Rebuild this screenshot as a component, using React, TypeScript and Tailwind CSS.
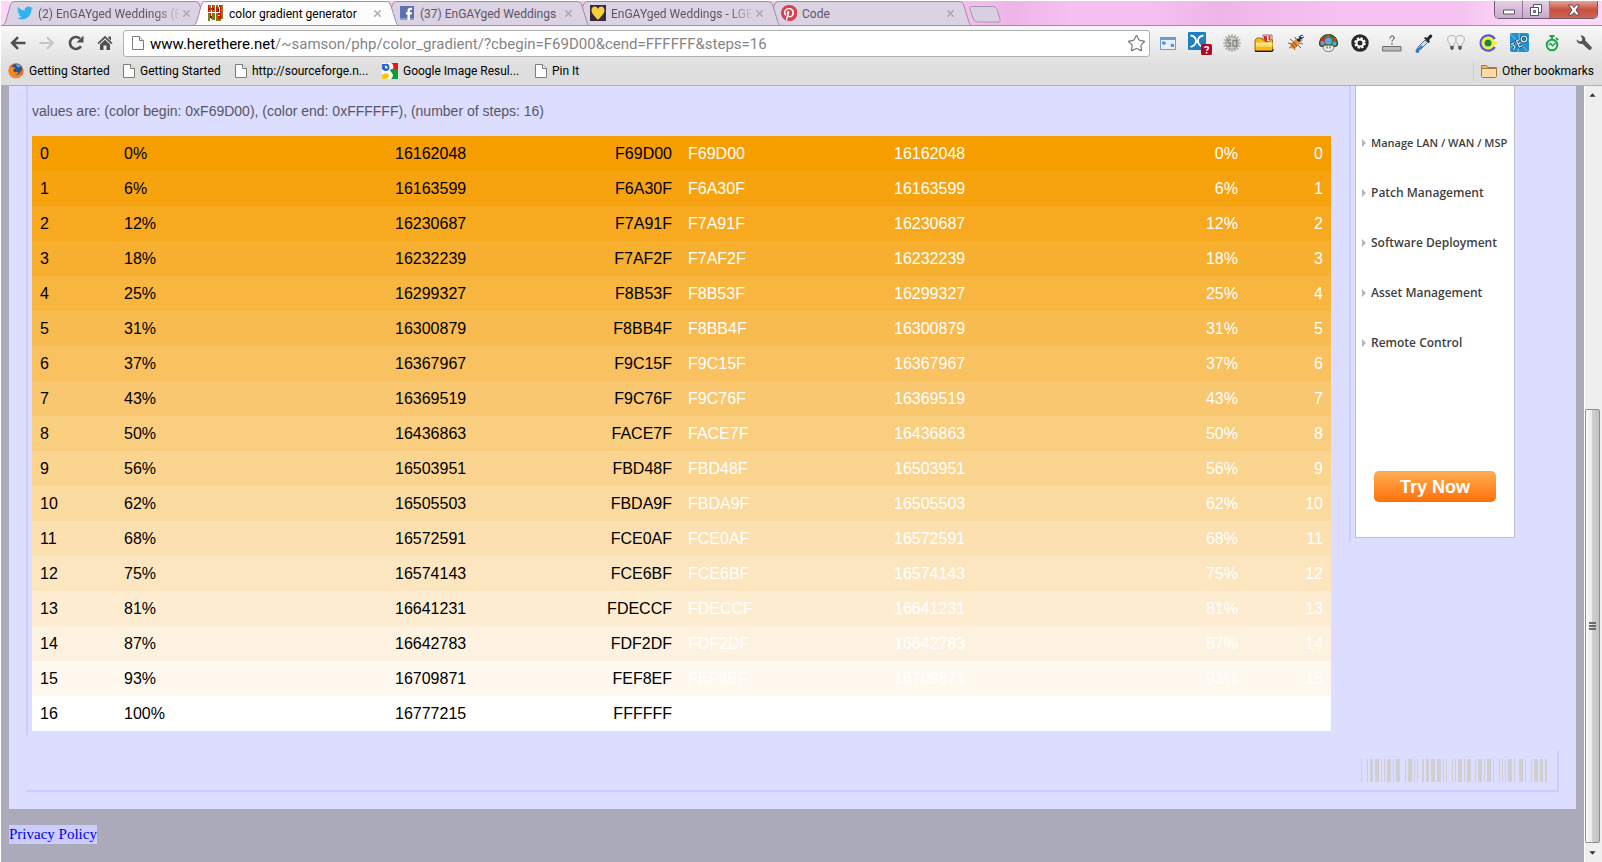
import type { ReactNode } from "react";
import { Star, X } from "lucide-react";

type Row = { step: number; pct: number; dec: number; hex: string; bg: string };

const ROWS: Row[] = [
  { step: 0, pct: 0, dec: 16162048, hex: "F69D00", bg: "bg-[#f69d00]" },
  { step: 1, pct: 6, dec: 16163599, hex: "F6A30F", bg: "bg-[#f6a30f]" },
  { step: 2, pct: 12, dec: 16230687, hex: "F7A91F", bg: "bg-[#f7a91f]" },
  { step: 3, pct: 18, dec: 16232239, hex: "F7AF2F", bg: "bg-[#f7af2f]" },
  { step: 4, pct: 25, dec: 16299327, hex: "F8B53F", bg: "bg-[#f8b53f]" },
  { step: 5, pct: 31, dec: 16300879, hex: "F8BB4F", bg: "bg-[#f8bb4f]" },
  { step: 6, pct: 37, dec: 16367967, hex: "F9C15F", bg: "bg-[#f9c15f]" },
  { step: 7, pct: 43, dec: 16369519, hex: "F9C76F", bg: "bg-[#f9c76f]" },
  { step: 8, pct: 50, dec: 16436863, hex: "FACE7F", bg: "bg-[#face7f]" },
  { step: 9, pct: 56, dec: 16503951, hex: "FBD48F", bg: "bg-[#fbd48f]" },
  { step: 10, pct: 62, dec: 16505503, hex: "FBDA9F", bg: "bg-[#fbda9f]" },
  { step: 11, pct: 68, dec: 16572591, hex: "FCE0AF", bg: "bg-[#fce0af]" },
  { step: 12, pct: 75, dec: 16574143, hex: "FCE6BF", bg: "bg-[#fce6bf]" },
  { step: 13, pct: 81, dec: 16641231, hex: "FDECCF", bg: "bg-[#fdeccf]" },
  { step: 14, pct: 87, dec: 16642783, hex: "FDF2DF", bg: "bg-[#fdf2df]" },
  { step: 15, pct: 93, dec: 16709871, hex: "FEF8EF", bg: "bg-[#fef8ef]" },
  { step: 16, pct: 100, dec: 16777215, hex: "FFFFFF", bg: "bg-white" },
];

const AD_LINKS = [
  { label: "Manage LAN / WAN / MSP", size: "text-[11px]" },
  { label: "Patch Management", size: "text-xs" },
  { label: "Software Deployment", size: "text-xs" },
  { label: "Asset Management", size: "text-xs" },
  { label: "Remote Control", size: "text-xs" },
];

// [x, width] of every bar
const BARS = [
  [0, 1], [6, 1], [9, 3], [14, 4], [20, 1], [23, 1], [26, 4], [32, 1], [35, 4],
  [44, 1], [47, 4], [53, 1], [56, 1], [61, 2], [65, 3], [70, 4], [76, 4], [82, 1], [85, 1],
  [91, 1], [94, 1], [97, 4], [103, 1], [106, 4], [114, 1], [117, 4], [123, 1], [126, 4], [132, 1],
  [138, 1], [141, 1], [144, 1], [147, 4], [153, 1], [158, 4], [164, 1],
  [170, 1], [173, 4], [179, 3], [184, 2],
];

/* ---------- favicons ---------- */

function TwitterIcon() {
  return (
    <svg viewBox="0 0 24 24" className="size-4" fill="#2fb3ee">
      <path d="M24 4.6a10 10 0 0 1-2.8.8 4.9 4.9 0 0 0 2.1-2.7 10 10 0 0 1-3.1 1.2 4.9 4.9 0 0 0-8.4 4.5A14 14 0 0 1 1.7 3.1a4.9 4.9 0 0 0 1.5 6.6 4.900 4.900 0 0 1-2.2-.6 4.900 4.900 0 0 0 3.900 4.900 5 5 0 0 1-2.200.1 4.900 4.900 0 0 0 4.600 3.400A9.900 9.900 0 0 1 0 19.500a14 14 0 0 0 7.500 2.200c9.100 0 14.300-7.700 14-14.600A10 10 0 0 0 24 4.600z" />
    </svg>
  );
}

function HereThereIcon() {
  return (
    <svg viewBox="0 0 16 16" className="size-4" shapeRendering="crispEdges">
      <path fill="#7e7e12" d="M1 0h2v7H1zM5 0h2v7H5zM8 0h2v2H8zM10 2h1v5h-1zM13 0h2v9h-2zM0 8h2v8H0zM4 8h3v7H4zM8 8h2v8H8zM10 14h3v2h-3zM13 9h2v5h-2z" />
      <path fill="#f40a0a" d="M0 0h1v7H0zM3 3h2v2H3zM4 0h1v3H4zM4 5h1v2H4zM8 2h2v5H8zM11 0h2v2h-2zM12 2h1v6h-1zM2 8h1v3H2zM3 11h1v3H3zM10 8h3v2h-3zM10 11h2v3h-2zM12 12h1v2h-1z" />
      <path fill="#5a1200" d="M1 3h1v2H1zM5 3h1v2H5zM10 4h1v3h-1zM2 11h1v2H2zM12 10h1v2h-1z" />
    </svg>
  );
}

function FacebookIcon() {
  return (
    <svg viewBox="0 0 16 16" className="size-4">
      <path fill="#5f70b0" d="M1 1h14v14H1z" />
      <path fill="#8e9bcb" d="M1 13h14v2H1z" />
      <path fill="#fff" d="M8.500 15V9.500H7V7.300h1.500V5.600c0-1.900 1-2.900 2.800-2.900H13v2.200h-1.200c-.7 0-.9.300-.9.900v1.500H13l-.3 2.200h-1.800V15z" />
    </svg>
  );
}

function HeartIcon() {
  return (
    <svg viewBox="0 0 16 16" className="size-4">
      <path fill="#352b3c" d="M0 0h16v16H0z" />
      <path fill="#f8d13a" d="M8 15C6 12.500 1.500 9 1.500 5.300 1.500 3 2.900 1.500 4.800 1.500 6.300 1.500 7.400 2.500 8 4c.6-1.500 1.700-2.500 3.200-2.500 1.900 0 3.300 1.500 3.300 3.800C14.500 9 10 12.500 8 15z" />
    </svg>
  );
}

function PinterestIcon() {
  return (
    <svg viewBox="0 0 24 24" className="size-4">
      <circle cx="12" cy="12" r="11" fill="#fff" />
      <path fill="#d8414f" d="M12 0C5.400 0 0 5.400 0 12c0 5.100 3.200 9.400 7.600 11.200-.1-.9-.2-2.400 0-3.500l1.500-6s-.4-.7-.4-1.800c0-1.700 1-3 2.200-3 1 0 1.500.8 1.500 1.700 0 1.100-.7 2.600-1 4-.3 1.200.6 2.200 1.800 2.200 2.100 0 3.800-2.200 3.800-5.500 0-2.900-2.100-4.900-5-4.900-3.400 0-5.400 2.600-5.400 5.200 0 1 .4 2.100.9 2.700.1.100.1.200.1.300l-.4 1.400c0 .2-.2.300-.4.200-1.500-.7-2.400-2.900-2.400-4.600 0-3.800 2.700-7.200 7.900-7.200 4.100 0 7.300 2.900 7.300 6.900 0 4.100-2.600 7.400-6.200 7.400-1.200 0-2.300-.6-2.700-1.400l-.7 2.800c-.3 1-1 2.300-1.500 3.100A12 12 0 1 0 12 0z" />
    </svg>
  );
}

function FirefoxIcon() {
  return (
    <svg viewBox="0 0 16 16" className="size-4">
      <circle cx="8" cy="7.800" r="7.500" fill="#d9601a" />
      <circle cx="8.600" cy="6.200" r="5.400" fill="#27569c" />
      <path fill="#6aa5dc" d="M8 1.500c2-.5 4.500.5 5 2.500-1.500-.5-2 .5-3 .2S8 3 8 1.500z" />
      <path fill="#f58b1e" d="M1 3c.6-.2 1.300.3 1.700 1 .8-.5 2-.4 2.800.2 1.200.3 2 .8 1.700 1.400-.4.700-1.700.5-2 1.300.1 1.300 1 2.500 2.800 2.300.9-.1 1.700-.6 2.400 0-.6 1.700-2 2.600-4 2.500 3 1.400 6.300-.3 6.700-4.500.6.800.8 1.800.6 2.800-.7 3.500-3.300 5.300-6.200 5.200C3.300 15 .7 12 .6 8c0-2 .6-3 .4-5z" />
      <path fill="#fbc840" d="M14.500 4.500c1 1.500 1.200 3.600.6 5.400-.4-1.800-.2-3.400-.6-5.400z" />
    </svg>
  );
}

function GoogleIcon() {
  return (
    <svg viewBox="0 0 16 16" className="size-4">
      <path fill="#fff" d="M0 0h16v16H0z" />
      <path fill="#e8161b" d="M9 0h7v6h-5c1-2 .5-4.500-2-6z" />
      <path fill="#0f9a40" d="M9 6h7v10H9c2.500-2 2.500-5 0-7-1-1-1-2 0-3z" />
      <path fill="#f5c518" d="M0 16v-4c2-2.500 7-2.500 7 .5 0 1.800-1.500 3.500-4 3.500z" />
      <path fill="#2a63d6" d="M0 1h3c3-1 4.500 1 4.500 3.500S6 8 4 8C1.500 8 1 6.500 0 6z" />
      <path fill="#fff" d="M2.800 3c1.500-1 3 .8 2.700 2.300-1 .9-2.700-.3-2.700-2.300z" />
    </svg>
  );
}

function PageIcon() {
  return (
    <svg viewBox="0 0 12 16" className="h-4 w-3" fill="#fff" stroke="#7d7d7d">
      <path d="M.5 1.500h7l4 4v9H.5z" />
      <path d="M7.500 1.500v4h4" fill="#eee" />
    </svg>
  );
}

function FolderIcon() {
  return (
    <svg viewBox="0 0 16 14" className="h-[14px] w-4" stroke="#a9793b">
      <path fill="#e9b972" d="M.5 12V1.500h5l1.500 2h8.500V12z" />
      <path fill="#fbdca4" d="M1.500 4.500h13l1 1v7l-1 1h-13l-1-1v-7z" />
    </svg>
  );
}

/* ---------- tab strip ---------- */

type Tab = { title: string; icon: ReactNode; active?: boolean; faded?: boolean; z: string };

const TABS: Tab[] = [
  { title: "(2) EnGAYged Weddings (E", icon: <TwitterIcon />, faded: true, z: "z-10" },
  { title: "color gradient generator", icon: <HereThereIcon />, active: true, z: "z-20" },
  { title: "(37) EnGAYged Weddings", icon: <FacebookIcon />, z: "z-10" },
  { title: "EnGAYged Weddings - LGE", icon: <HeartIcon />, faded: true, z: "z-5" },
  { title: "Code", icon: <PinterestIcon />, z: "z-0" },
];

function BrowserTab({ title, icon, active, faded, z }: Tab) {
  return (
    <div className={`relative -mr-[15px] flex h-6 w-[206px] shrink-0 items-center pl-[15px] pr-4 ${z}`}>
      <svg
        viewBox="0 0 206 24"
        preserveAspectRatio="none"
        className="absolute inset-0 -z-10 size-full"
        fill={active ? "#fcfcfc" : "#dbd2e4"}
        stroke="#9c8fa3"
      >
        <path d="M.5 24.500C3 23.500 3.500 21 4.500 18L8 5C9 2 10 .5 13 .5h180c3 0 4 1.500 5 4.500l4 13c1 3 1.500 5.500 3.500 6.500" />
      </svg>
      <span className="shrink-0">{icon}</span>
      <span
        className={`ml-[5px] flex-1 whitespace-nowrap pt-px text-left ${active ? "text-black" : "text-[#5d5566]"} ${
          faded ? "[mask-image:linear-gradient(to_right,black_82%,transparent)]" : ""
        }`}
      >
        {title}
      </span>
      <button aria-label={`Close ${title}`} className="text-[#a9a3ae]">
        <X size={11} strokeWidth={3} />
      </button>
    </div>
  );
}

function TabStrip() {
  return (
    <div className="flex h-[25px] items-end border-t border-white bg-[linear-gradient(90deg,#ffd6fb_0,#f7c0f0_30%,#f4bdee_61%,#edb4e8_63%,#f6c0f2_67%,#f5bff1_72%,#eeb6e8_76%,#f6c2f2_84%,#f6c2f1_91%,#fbdaf8_95%,#fbd8f8_100%)] pl-px">
      <div className="flex items-end">
        {TABS.map((tab) => (
          <BrowserTab key={tab.title} {...tab} />
        ))}
      </div>
      <button aria-label="New tab" className="mb-[2px] ml-3">
        <svg viewBox="0 0 32 17" className="h-[17px] w-8" fill="#d8cfe2" stroke="#a497ab">
          <path d="M2.500.5h21c2.500 0 4 1 5 4l2.500 9c.5 2-.5 2.500-2 2.500H9c-2.500 0-4-1-5-4L1 3C.5 1.500 1 .5 2.500.5z" />
        </svg>
      </button>
      <div className="ml-auto mr-1 flex h-[18px] self-start overflow-hidden rounded-b-[5px] border border-t-0 border-[#6d5a6e]">
        <button
          aria-label="Minimize"
          className="flex w-7 items-center justify-center border-r border-[#8c7890] bg-linear-to-b from-[#e6cfe6] to-[#c9a9ca]"
        >
          <svg viewBox="0 0 14 6" className="mt-1 h-[6px] w-[14px]">
            <path d="M1.500 1h11v4h-11z" fill="#fff" stroke="#555465" />
          </svg>
        </button>
        <button
          aria-label="Restore"
          className="flex w-[27px] items-center justify-center border-r border-[#8c7890] bg-linear-to-b from-[#e6cfe6] to-[#c9a9ca]"
        >
          <svg viewBox="0 0 12 12" className="size-3" fill="#fff" stroke="#555465">
            <path d="M3.500.5h8v8h-8z" />
            <path d="M.5 3.500h8v8h-8z" />
            <path d="M3.500 6.500h2v2h-2z" fill="#c9a9ca" />
          </svg>
        </button>
        <button
          aria-label="Close window"
          className="flex w-[47px] items-center justify-center bg-linear-to-b from-[#e2a49b] from-0% via-[#c8503f] via-50% to-[#c9654e]"
        >
          <svg viewBox="0 0 14 12" className="h-3 w-[14px]" fill="#fff" stroke="#5c4653">
            <path d="M1.500 1h3.300L7 3.600 9.200 1h3.300L9 6l3.500 5H9.200L7 8.400 4.800 11H1.500L5 6z" />
          </svg>
        </button>
      </div>
    </div>
  );
}

/* ---------- toolbar ---------- */

const EXTENSIONS: { name: string; icon: ReactNode }[] = [
  {
    name: "Window resizer",
    icon: (
      <svg viewBox="0 0 16 13" className="h-[13px] w-4">
        <path d="M.5.5h15v12H.5z" fill="#e8f1fc" stroke="#6d9bd8" />
        <path d="M0 0h16v3H0z" fill="#6d9bd8" />
        <path d="M2 4.500h3l1 2-1.500 1.500L2 7zM10.500 7.500l1.500-1L14 7.500v2.500h-3z" fill="#5e90d2" />
      </svg>
    ),
  },
  {
    name: "Butterfly",
    icon: (
      <svg viewBox="0 0 24 24" className="size-6">
        <rect width="18" height="18" y="1" rx="1" fill="#1f7fc3" />
        <path d="M2.500 4.500C6 5 8 7 8 10s-2 5-5.500 6M15.500 4.500C12 5 10 7 10 10s2 5 5.500 6" stroke="#fff" strokeWidth="1.800" fill="none" />
        <path d="M8 9h2v3H8z" fill="#fff" />
        <rect x="13" y="13" width="11" height="11" rx="1.500" fill="#ae0a28" />
        <path d="M16.500 16.800c.2-1.600 4-1.600 4 .3 0 1.200-1.800 1.300-1.800 2.600M18.600 21v1.500" stroke="#fff" strokeWidth="1.500" fill="none" />
      </svg>
    ),
  },
  {
    name: "Seo gear",
    icon: (
      <svg viewBox="0 0 18 18" className="size-[18px]">
        <path d="M9 0v18M0 9h18M2.600 2.600l12.800 12.800M15.400 2.600L2.600 15.400M5.500.7l7 16.600M12.500.7l-7 16.600M.7 5.500l16.600 7M.7 12.500l16.600-7" stroke="#9c9c98" strokeWidth="1.200" />
        <circle cx="9" cy="9" r="6.300" fill="#cfcfcb" stroke="#a3a39f" strokeWidth="1.200" />
        <path d="M8 6H5v3h2.500v3H4.500M10 6.500h3.500V12H10z" fill="none" stroke="#85857f" strokeWidth="1.300" />
      </svg>
    ),
  },
  {
    name: "Folder",
    icon: (
      <svg viewBox="0 0 20 18" className="h-[18px] w-5">
        <path d="M9 1h9v9H9z" fill="#fff" stroke="#777" />
        <path d="M10 2h3v5h-3zM14.500 1.500h2V6h-2z" fill="#e02b2b" />
        <path d="M1 17V6l2-2h4l2 2h1l1 1.500h4l2-2 1.500.5v9.500L17.500 17z" fill="#f9b813" stroke="#9c6c08" />
        <path d="M2 8.500h16.500V11H2z" fill="#ffe98a" />
        <path d="M2 11h16.500v2H2z" fill="#fdd650" />
        <path d="M1 17.300h17l1.500-2" stroke="#1d1600" strokeWidth="1.200" fill="none" />
      </svg>
    ),
  },
  {
    name: "Firebug",
    icon: (
      <svg viewBox="0 0 18 18" className="size-[18px]">
        <path d="M3 5l4 3M1 9l5 1M2 14l4-2M8 3l2 4M8 16l-1-3M14 14l-3-3M16 10l-4-1" stroke="#8a6038" fill="none" />
        <ellipse cx="8" cy="10" rx="3.200" ry="5.800" transform="rotate(45 8 10)" fill="#e8923e" />
        <path d="M4 10l4 4M6 8l4 4" stroke="#a2551c" strokeWidth="1.200" />
        <circle cx="12.500" cy="5" r="2.700" fill="#1f2c31" />
        <circle cx="11" cy="3.500" r="1.300" fill="#dfe8ea" />
        <circle cx="14.500" cy="6" r="1.200" fill="#9fb0b4" />
        <path d="M13 2l3-1M15 4l2-1" stroke="#333" />
      </svg>
    ),
  },
  {
    name: "Mushroom",
    icon: (
      <svg viewBox="0 0 19 18" className="h-[18px] w-[19px]">
        <path d="M.5 10C.5 4 4.500.5 9.500.5s9 3.500 9 9.500c0 1.500-1 2.500-2 2.500h-14c-1 0-2-1-2-2.500z" fill="#2c7a2c" stroke="#333" />
        <path d="M1 9c0-3 2-6 4-7l2 4-2 6-3-.5z" fill="#b33a2a" />
        <circle cx="9.500" cy="7" r="3.600" fill="#5aa7e6" />
        <circle cx="15.500" cy="5.500" r="2" fill="#cf3a30" />
        <circle cx="3.500" cy="9" r="2" fill="#5aa7e6" />
        <circle cx="15.500" cy="9.500" r="2" fill="#5aa7e6" />
        <circle cx="9" cy="1.800" r="1.500" fill="#e8433a" />
        <path d="M4.500 12c2-1 8-1 10 0 1 3-1 5.500-5 5.500s-6-2.500-5-5.500z" fill="#f4f1ea" stroke="#777" />
        <path d="M8 12.500v2M11 12.500v2" stroke="#333" />
      </svg>
    ),
  },
  {
    name: "Options",
    icon: (
      <svg viewBox="0 0 18 18" className="size-[18px]">
        <circle cx="9" cy="9" r="8.700" fill="#26282b" />
        <circle cx="9" cy="9" r="4.800" fill="none" stroke="#fff" strokeWidth="2" strokeDasharray="2.200 1.570" />
        <circle cx="9" cy="9" r="3.500" fill="none" stroke="#fff" strokeWidth="2" />
      </svg>
    ),
  },
  {
    name: "Page rank",
    icon: (
      <svg viewBox="0 0 20 18" className="h-[18px] w-5">
        <path d="M8 4.500c0-3.500 4.500-3 4.200-.5C12 5.500 10 5.800 10 7.500M10 9v1.500" fill="none" stroke="#333" />
        <path d="M.5 12.500h18.500v4.500H.5z" fill="#bdbdbd" stroke="#6e6e6e" />
      </svg>
    ),
  },
  {
    name: "Color picker",
    icon: (
      <svg viewBox="0 0 18 20" className="h-5 w-[18px]">
        <path d="M10 7l2.500 2.500-7 7H3.500L3 14z" fill="#bfe0f6" stroke="#666f78" />
        <path d="M6 12l2 2-3 3-2-1z" fill="#3b7fd0" />
        <path d="M9 5l1.500-1L12 5l2.500-3c1.500-1.500 3.500.5 2.500 2l-3 3 1 1.500-1.500 1.500z" fill="#23262c" />
        <path d="M2.500 14.500c1.500 2 2 2.500 2 3.500a2 2 0 0 1-4 0c0-1 .5-1.500 2-3.500z" fill="#3a78c9" />
      </svg>
    ),
  },
  {
    name: "Bulbs",
    icon: (
      <svg viewBox="0 0 18 18" className="size-[18px]">
        <g fill="#f1f1f1" stroke="#b3b3b3">
          <path d="M5 1.500c-6 0-5 6-2 8.500v2h4v-2c3-3 3-8.500-2-8.500z" />
          <path d="M13 1.500c-5 0-5 5.500-2 8.500v2h4v-2c3-2.500 4-8.500-2-8.500z" />
        </g>
        <path d="M3.300 12h3.400v2.500L5.500 16h-1l-1.200-1.500zM11.300 12h3.400v2.500L13.500 16h-1l-1.200-1.500z" fill="#555" />
      </svg>
    ),
  },
  {
    name: "Circle C",
    icon: (
      <svg viewBox="0 0 18 18" className="size-[18px]">
        <path d="M15.700 5A7.500 7.500 0 1 0 15.700 13" fill="none" stroke="#5754e0" strokeWidth="2.600" />
        <circle cx="9" cy="9" r="5.200" fill="none" stroke="#f4f02a" strokeWidth="2.600" />
        <path d="M12 7.700h6v2.600h-6z" fill="#f4f02a" />
        <circle cx="9" cy="9" r="3.500" fill="#1a8a2c" />
      </svg>
    ),
  },
  {
    name: "SEO",
    icon: (
      <svg viewBox="0 0 20 20" className="size-5">
        <rect width="19" height="19" rx="2" fill="#2392cc" />
        <path d="M9.500 9.500L1 2M9.500 9.500L9 0M9.500 9.500L19 7M9.500 9.500L17 18M9.500 9.500L8 19M9.500 9.500L0 14" stroke="#7cc8ea" />
        <g fill="none" stroke="#0b4068" strokeWidth="2.600">
          <path d="M4.500 9.500l-3 1.500 3.500 2.500-1.500 3.500M9.500 6.500L6.500 8l3 6 3-1.500M8 11l2.500-1.300" />
          <circle cx="14" cy="6" r="2.800" />
        </g>
        <g fill="none" stroke="#d9f0fa" strokeWidth="1.300">
          <path d="M4.500 9.500l-3 1.500 3.500 2.500-1.500 3.500M9.500 6.500L6.500 8l3 6 3-1.500M8 11l2.500-1.300" />
          <circle cx="14" cy="6" r="2.800" />
        </g>
      </svg>
    ),
  },
  {
    name: "Stopwatch",
    icon: (
      <svg viewBox="0 0 14 18" className="h-[18px] w-[14px]" fill="none" stroke="#1fa64a">
        <circle cx="7" cy="11" r="5.300" fill="#e9f8ee" strokeWidth="2" />
        <path d="M3.500 11l2-1.500 2 2.500L10.500 9" strokeWidth="1.500" />
        <path d="M7 3v3M4.500 2h5M11 4l2 2" strokeWidth="2" />
      </svg>
    ),
  },
  {
    name: "Customize",
    icon: (
      <svg viewBox="0 0 18 18" className="size-[18px]">
        <path
          fill="#555"
          d="M5.500 1.500C8.500 1 11 3.500 10.300 6.500l6 6.200c1.500 1.600-1 4.300-2.800 2.800L7.300 9.700C4.300 10.600 1.500 8.500 1.500 5.500l3 2L7 6.800 7.300 4.500z"
        />
      </svg>
    ),
  },
];

function Toolbar() {
  return (
    <div className="flex h-[34px] items-center">
      <nav className="flex w-[122px] items-center pl-[2px]">
        <button aria-label="Back" className="flex w-[29px] justify-center">
          <svg viewBox="0 0 16 14" className="h-[14px] w-4" fill="none" stroke="#505050" strokeWidth="2.600">
            <path d="M15.500 7H2.500M8 1.200L2.200 7 8 12.800" />
          </svg>
        </button>
        <button aria-label="Forward" className="flex w-[29px] justify-center">
          <svg viewBox="0 0 16 14" className="h-[14px] w-4" fill="none" stroke="#c4c4c4" strokeWidth="2.200">
            <path d="M.5 7h13M8 1.200L13.800 7 8 12.800" />
          </svg>
        </button>
        <button aria-label="Reload" className="flex w-[29px] justify-center">
          <svg viewBox="0 0 16 16" className="size-4">
            <path d="M13 11.200A6 6 0 1 1 12 3.500" fill="none" stroke="#505050" strokeWidth="2.600" />
            <path d="M15.500.5v7h-7z" fill="#505050" />
          </svg>
        </button>
        <button aria-label="Home" className="flex w-[29px] justify-center">
          <svg viewBox="0 0 16 16" className="size-4" fill="#505050">
            <path d="M8 .8L15.500 8 14.300 9.200 8 3.300 1.700 9.200.5 8zM11.500 1.500H14v4l-2.500-2.300z" />
            <path d="M3 9.500l5-4.700 5 4.700V15H9.500v-4.500h-3V15H3z" />
          </svg>
        </button>
      </nav>
      <div className="flex h-[27px] flex-1 items-center rounded-[3px] border border-[#b0b0b0] bg-white pl-2 pr-[3px]">
        <PageIcon />
        <div className="ml-[6px] flex-1 whitespace-nowrap pt-px text-[15px] leading-6 text-[#858585]">
          <span className="text-black">www.herethere.net</span>
          /~samson/php/color_gradient/?cbegin=F69D00&amp;cend=FFFFFF&amp;steps=16
        </div>
        <button aria-label="Bookmark this page">
          <Star size={19} strokeWidth={1.500} color="#777" />
        </button>
      </div>
      <div className="ml-[2px] mr-[2px] flex">
        {EXTENSIONS.map((ext) => (
          <button key={ext.name} aria-label={ext.name} className="flex h-6 w-8 items-center justify-center">
            {ext.icon}
          </button>
        ))}
      </div>
    </div>
  );
}

const BOOKMARKS = [
  { title: "Getting Started", icon: <FirefoxIcon />, width: "w-[115px]" },
  { title: "Getting Started", icon: <PageIcon />, width: "w-[112px]" },
  { title: "http://sourceforge.n...", icon: <PageIcon />, width: "w-[147px]" },
  { title: "Google Image Resul...", icon: <GoogleIcon />, width: "w-[153px]" },
  { title: "Pin It", icon: <PageIcon />, width: "w-[60px]" },
];

function BookmarksBar() {
  return (
    <div className="flex h-[25px] items-center pb-[3px] pl-[7px] pr-2 text-black">
      {BOOKMARKS.map((b, i) => (
        <a key={i} href="#" className={`flex shrink-0 items-center gap-[5px] whitespace-nowrap ${b.width}`}>
          {b.icon}
          {b.title}
        </a>
      ))}
      <button className="ml-auto flex h-5 items-center gap-[5px] border-l border-[#c3cdd6] pl-[7px]">
        <FolderIcon />
        Other bookmarks
      </button>
    </div>
  );
}

/* ---------- page ---------- */

function GradientTable() {
  return (
    <table className="w-full table-fixed border-collapse text-base leading-[19px]">
      <colgroup>
        <col className="w-[84px]" />
        <col className="w-[271px]" />
        <col className="w-[88px]" />
        <col className="w-[205px]" />
        <col className="w-[206px]" />
        <col className="w-[88px]" />
        <col className="w-[272px]" />
        <col className="w-[85px]" />
      </colgroup>
      <tbody>
        {ROWS.map((r) => (
          <tr key={r.step} className={r.bg}>
            <td className="p-2 text-black">{r.step}</td>
            <td className="p-2 text-black">{r.pct}%</td>
            <td className="p-2 text-black">{r.dec}</td>
            <td className="p-2 text-right text-black">{r.hex}</td>
            <td className="p-2 text-white">{r.hex}</td>
            <td className="p-2 text-white">{r.dec}</td>
            <td className="p-2 text-right text-white">{r.pct}%</td>
            <td className="p-2 text-right text-white">{r.step}</td>
          </tr>
        ))}
      </tbody>
    </table>
  );
}

function Advert() {
  return (
    <aside className="w-[210px] shrink-0">
      <div className="w-[166px] border-l-2 border-[#ccf] pb-1 pl-1">
        <div className="flex h-[452px] flex-col border border-t-0 border-[#bfbfc6] bg-white pt-8">
          {AD_LINKS.map(({ label, size }) => (
            <a
              key={label}
              href="#"
              className={`flex h-[50px] items-center gap-[5px] whitespace-nowrap pl-[6px] font-['Open_Sans',sans-serif] font-semibold text-[#3f3f3f] ${size}`}
            >
              <svg viewBox="0 0 4 8" className="h-2 w-1 shrink-0" fill="#b5b5b5">
                <path d="M0 0l4 4-4 4z" />
              </svg>
              {label}
            </a>
          ))}
          <button className="mx-[18px] mb-[35px] mt-auto h-[31px] rounded-[5px] border-t border-[#e8a878] bg-linear-to-b from-[#ffad55] from-0% via-[#ff9a38] via-30% to-[#ff6f00] text-lg font-bold text-white">
            Try Now
          </button>
        </div>
      </div>
    </aside>
  );
}

function Scrollbar() {
  return (
    <div aria-hidden className="flex w-[18px] shrink-0 flex-col border-l border-white bg-[#efefef] pr-[2px]">
      <svg viewBox="0 0 17 17" className="h-[17px] w-[15px]" fill="#333">
        <path d="M5 11l3.500-4 3.500 4z" />
      </svg>
      <div className="flex-[306]" />
      <div className="flex flex-[433] items-center justify-center rounded-[2px] border border-[#8f8f93] bg-[linear-gradient(90deg,#fbfbfb,#ebebeb_45%,#cfcfd2_50%,#c2c2c6_100%)]">
        <div className="flex w-[7px] flex-col gap-px">
          <span className="h-[2px] bg-[#6b6b6b]" />
          <span className="h-[2px] bg-[#6b6b6b]" />
          <span className="h-[2px] bg-[#6b6b6b]" />
        </div>
      </div>
      <svg viewBox="0 0 17 19" className="h-[19px] w-[15px]" fill="#333">
        <path d="M5 8h7l-3.500 4z" />
      </svg>
    </div>
  );
}

export default function App() {
  return (
    <div className="flex min-h-screen flex-col border-l border-white font-['Liberation_Sans',Arial,sans-serif]">
      <header className="font-[Roboto,sans-serif] text-[12px] leading-4">
        <TabStrip />
        <div className="border-b border-t border-b-[#b0b0b8] border-t-[#98929c] bg-linear-to-b from-[#f8f8f8] to-[#dedede] to-70%">
          <Toolbar />
          <BookmarksBar />
        </div>
      </header>
      <div className="flex flex-1">
        <main className="min-w-0 flex-1 bg-[#aaaaba] px-2">
          <div className="bg-[#ddf] pb-[17px] pl-[17px] pr-[17px]">
            <div className="flex items-start">
              <div className="min-w-0 flex-1 border-l-2 border-[#ccf] pb-1 pl-1 pr-[18px]">
                <p className="pb-4 pt-[17px] text-sm leading-[17px] text-[#556]">
                  values are: (color begin: 0xF69D00), (color end: 0xFFFFFF), (number of steps: 16)
                </p>
                <GradientTable />
              </div>
              <Advert />
            </div>
            <div className="mt-4 flex justify-end border-b-2 border-r-2 border-[#ccf] pb-2 pr-[10px] pt-2">
              <svg viewBox="0 0 186 23" className="h-[23px] w-[186px]" fill="#cfcfd0">
                {BARS.map(([x, w]) => (
                  <rect key={x} x={x} y="0" width={w} height="23" />
                ))}
              </svg>
            </div>
          </div>
          <p className="py-4 font-['Liberation_Serif',serif] text-[15px] leading-[19px]">
            <a href="#" className="inline-block bg-[#ccf] text-[#00e]">
              Privacy Policy
            </a>
          </p>
        </main>
        <Scrollbar />
      </div>
    </div>
  );
}
